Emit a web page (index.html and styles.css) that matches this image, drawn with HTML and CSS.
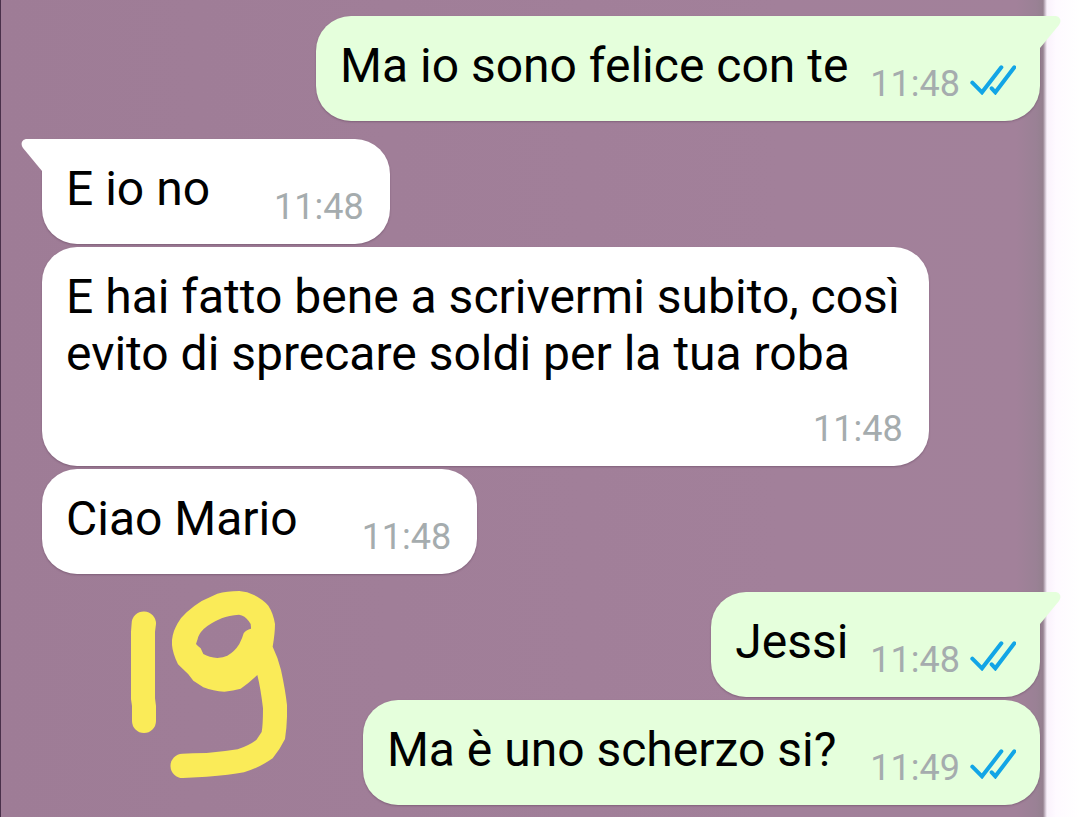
FILE: index.html
```html
<!DOCTYPE html>
<html lang="it">
<head>
<meta charset="utf-8">
<title>Chat</title>
<link rel="stylesheet" href="styles.css">
</head>
<body>
<svg class="defs" aria-hidden="true">
  <symbol id="ticks" viewBox="330 189 138 96">
    <path d="M337 248L366 277L424 202M395 265L406 277L463 202" fill="none" stroke="#12a5e6" stroke-width="12" stroke-linecap="round" stroke-linejoin="miter"/>
  </symbol>
  <symbol id="tail" viewBox="0 0 23 33">
    <path d="M23 0H6C1 0 -1 5 2 9L21 32L23 33Z"/>
  </symbol>
</svg>
<main class="chat">
  <article class="bubble out first">
    <svg class="tail" aria-hidden="true"><use href="#tail"/></svg>
    <p class="text">Ma io sono felice con te</p>
    <div class="meta"><time>11:48</time><svg class="ticks" role="img" aria-label="Letto"><use href="#ticks"/></svg></div>
  </article>
  <article class="bubble in first">
    <svg class="tail" aria-hidden="true"><use href="#tail"/></svg>
    <p class="text">E io no</p>
    <div class="meta"><time>11:48</time></div>
  </article>
  <article class="bubble in stacked">
    <p class="text">E hai fatto bene a scrivermi subito, così<br>evito di sprecare soldi per la tua roba</p>
    <div class="meta"><time>11:48</time></div>
  </article>
  <article class="bubble in">
    <p class="text">Ciao Mario</p>
    <div class="meta"><time>11:48</time></div>
  </article>
  <article class="bubble out first">
    <svg class="tail" aria-hidden="true"><use href="#tail"/></svg>
    <p class="text">Jessi</p>
    <div class="meta"><time>11:48</time><svg class="ticks" role="img" aria-label="Letto"><use href="#ticks"/></svg></div>
  </article>
  <article class="bubble out loose">
    <p class="text">Ma è uno scherzo si?</p>
    <div class="meta"><time>11:49</time><svg class="ticks" role="img" aria-label="Letto"><use href="#ticks"/></svg></div>
  </article>
  <svg class="doodle" viewBox="0 0 600 690" role="img" aria-label="19">
    <path d="M65 160A36 36 0 0 1 138 162L135 185V385L138 408V453A36 36 0 0 1 66 453V408L63 388V185Z"/>
    <path fill-rule="evenodd" d="M186 210C188 190 195 174 203 160Q213 142 230 127Q252 107 275 93L322 71Q350 63 388 63Q413 65 432 75Q458 88 475 107Q490 130 495 162Q495 190 488 230Q505 265 513 300Q526 360 531 405V440Q530 475 525 507Q510 538 488 565Q450 592 402 607Q360 615 290 620L219 624A36 36 0 0 1 217 551Q245 549 290 549Q340 545 383 538Q418 526 439 510L455 486Q459 465 459 415Q452 355 442 315Q420 337 392 356Q370 362 343 365Q310 364 280 352L250 332L235 313L204 283Q188 250 186 225Z M258 222Q265 230 272 235L280 252Q298 263 322 264Q340 263 352 257Q374 245 388 222Q397 205 401 190Q408 179 423 176Q424 160 416 153Q405 137 387 134Q357 136 335 145Q300 160 281 177Q266 192 263 207Z"/>
  </svg>
</main>
</body>
</html>
```
FILE: styles.css
```css
* {
  box-sizing: border-box;
}

body {
  margin: 0;
  min-height: 100vh;
  font-family: Roboto, "Liberation Sans", sans-serif;
  background: linear-gradient(to left, #ffffff 0, #fefaff 24px, #faf2fc 33px, #c9bcc9 35px, #94808f 37px, #9a8195 44px, #a2819a 64px, #a2809a 300px, #9e7c96 100%);
}

.defs {
  display: none;
}

.chat {
  position: relative;
  display: flex;
  flex-direction: column;
  gap: 3px;
  min-height: 100vh;
  padding: 1px 40px 13px 41px;
  border-left: 1px solid #49304a;
}

.bubble {
  position: relative;
  display: flex;
  align-items: flex-end;
  max-width: 100%;
  padding: 21px 24px 16px;
  border-radius: 35px;
  box-shadow: 0 1px 2px rgba(70, 40, 65, 0.35);
}

.in {
  align-self: flex-start;
  gap: 64px;
  padding-right: 26px;
  background: #ffffff;
}

.out {
  align-self: flex-end;
  gap: 22px;
  background: #e5ffdc;
}

.loose {
  gap: 34px;
}

.first {
  margin-top: 15px;
}

.in.first {
  border-top-left-radius: 0;
}

.out.first {
  border-top-right-radius: 0;
}

.tail {
  position: absolute;
  top: 0;
  width: 23px;
  height: 33px;
}

.in .tail {
  left: -21px;
  fill: #ffffff;
}

.out .tail {
  right: -21px;
  fill: #e5ffdc;
  transform: scaleX(-1);
}

.text {
  margin: 0 0 11px;
  color: #000000;
  font-size: 48px;
  line-height: 57px;
}

.stacked {
  flex-direction: column;
  gap: 26px;
}

.stacked .text {
  margin: 0;
  padding-right: 3px;
}

.meta {
  display: flex;
  align-items: flex-start;
  gap: 10px;
  color: #a5acae;
  font-size: 36px;
  line-height: 42px;
}

.ticks {
  width: 46px;
  height: 32px;
}

.doodle {
  position: absolute;
  top: 570px;
  left: 109px;
  width: 200px;
  height: 230px;
  fill: #faeb58;
}
```
